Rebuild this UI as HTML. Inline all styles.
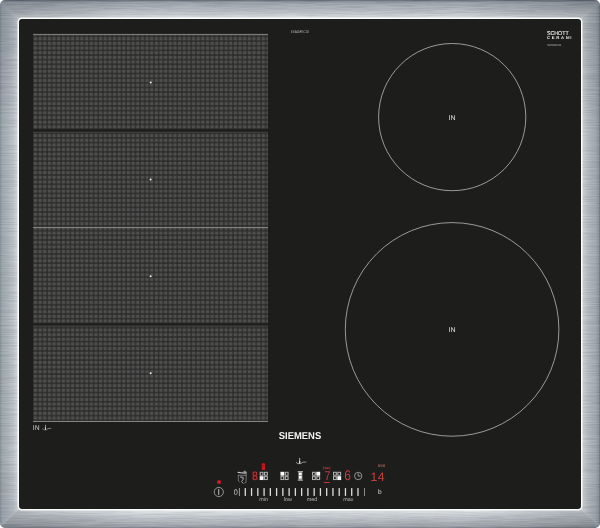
<!DOCTYPE html>
<html lang="en">
<head>
<meta charset="utf-8">
<title>Siemens EX645FEC1E induction hob</title>
<style>
html,body{margin:0;padding:0;background:#fff;}
body{width:600px;height:528px;overflow:hidden;position:relative;font-family:"Liberation Sans",sans-serif;}
svg{position:absolute;left:0;top:0;display:block;}
text{font-family:"Liberation Sans",sans-serif;text-rendering:geometricPrecision;}
svg{will-change:transform;opacity:0.999;}
</style>
</head>
<body>
<svg width="600" height="528" viewBox="0 0 600 528">
<defs>
<linearGradient id="gTop" x1="0" y1="0" x2="0" y2="19" gradientUnits="userSpaceOnUse">
<stop offset="0" stop-color="#5c646c"/>
<stop offset="0.05" stop-color="#78808a"/>
<stop offset="0.12" stop-color="#969ea6"/>
<stop offset="0.30" stop-color="#a6adb4"/>
<stop offset="0.50" stop-color="#b1b7bd"/>
<stop offset="0.68" stop-color="#bfc4c9"/>
<stop offset="0.84" stop-color="#d0d4d7"/>
<stop offset="1" stop-color="#e6e9eb"/>
</linearGradient>
<linearGradient id="gBot" x1="0" y1="509" x2="0" y2="528" gradientUnits="userSpaceOnUse">
<stop offset="0" stop-color="#f0f2f3"/>
<stop offset="0.10" stop-color="#e0e3e6"/>
<stop offset="0.30" stop-color="#cdd1d5"/>
<stop offset="0.55" stop-color="#b9bec4"/>
<stop offset="0.80" stop-color="#a7adb4"/>
<stop offset="0.93" stop-color="#999fa7"/>
<stop offset="1" stop-color="#7c828a"/>
</linearGradient>
<linearGradient id="gLeft" x1="0" y1="0" x2="19" y2="0" gradientUnits="userSpaceOnUse">
<stop offset="0" stop-color="#868e96"/>
<stop offset="0.12" stop-color="#9ea6ae"/>
<stop offset="0.40" stop-color="#abb2ba"/>
<stop offset="0.70" stop-color="#bcc2c8"/>
<stop offset="0.88" stop-color="#cfd4d8"/>
<stop offset="1" stop-color="#e2e5e8"/>
</linearGradient>
<linearGradient id="gRight" x1="581" y1="0" x2="600" y2="0" gradientUnits="userSpaceOnUse">
<stop offset="0" stop-color="#e2e5e8"/>
<stop offset="0.13" stop-color="#c8cdd2"/>
<stop offset="0.40" stop-color="#b2b8bf"/>
<stop offset="0.78" stop-color="#a0a7af"/>
<stop offset="0.92" stop-color="#8e959d"/>
<stop offset="1" stop-color="#687078"/>
</linearGradient>
<filter id="fblur" x="-5%" y="-5%" width="110%" height="110%"><feGaussianBlur stdDeviation="0.7"/></filter>
<linearGradient id="gEnds" x1="0" y1="0" x2="600" y2="0" gradientUnits="userSpaceOnUse">
<stop offset="0" stop-color="#38404a" stop-opacity="0.28"/>
<stop offset="0.22" stop-color="#38404a" stop-opacity="0"/>
<stop offset="0.78" stop-color="#38404a" stop-opacity="0"/>
<stop offset="1" stop-color="#38404a" stop-opacity="0.28"/>
</linearGradient>
<linearGradient id="gEndsV" x1="0" y1="0" x2="0" y2="528" gradientUnits="userSpaceOnUse">
<stop offset="0" stop-color="#38404a" stop-opacity="0.22"/>
<stop offset="0.25" stop-color="#38404a" stop-opacity="0"/>
<stop offset="0.85" stop-color="#38404a" stop-opacity="0"/>
<stop offset="1" stop-color="#38404a" stop-opacity="0.08"/>
</linearGradient>
<filter id="brush" x="0" y="0" width="100%" height="100%" color-interpolation-filters="sRGB">
<feTurbulence type="fractalNoise" baseFrequency="0.03 1.1" numOctaves="3" seed="7" result="n"/>
<feColorMatrix in="n" type="matrix" values="2.4 0 0 0 -0.62  2.4 0 0 0 -0.62  2.4 0 0 0 -0.6  0 0 0 0 1"/>
</filter>
<clipPath id="outer"><rect x="0" y="0" width="600" height="528" rx="5" ry="5"/></clipPath>
<filter id="soft" x="-2%" y="-2%" width="104%" height="104%"><feGaussianBlur stdDeviation="0.7"/></filter>
</defs>

<g clip-path="url(#outer)">
<g filter="url(#fblur)">
<rect x="-20" y="-20" width="640" height="568" fill="#a4abb3"/>
<rect x="-20" y="0" width="640" height="20.0" fill="url(#gTop)"/>
<rect x="-20" y="-20" width="640" height="20.3" fill="#646c74"/>
<rect x="-20" y="508.0" width="640" height="20.0" fill="url(#gBot)"/>
<rect x="-20" y="527.7" width="640" height="20" fill="#7c828a"/>
<polygon points="-20,-20 0,0 19.0,19.0 19.0,509.0 0,528 -20,548" fill="url(#gLeft)"/>
<polygon points="620,-20 600,0 581.0,19.0 581.0,509.0 600,528 620,548" fill="url(#gRight)"/>
<polygon points="-20,-20 620,-20 581.0,19.0 19.0,19.0" fill="url(#gEnds)"/>
<polygon points="-20,548 620,548 581.0,509.0 19.0,509.0" fill="url(#gEnds)"/>
<polygon points="-20,-20 19.0,19.0 19.0,509.0 -20,548" fill="url(#gEndsV)"/>
<polygon points="620,-20 581.0,19.0 581.0,509.0 620,548" fill="url(#gEndsV)"/>
</g>
<rect x="0" y="0" width="600" height="528" filter="url(#brush)" opacity="0.06"/>
</g>
<rect x="18.3" y="18.3" width="563.4" height="491.4" rx="3.6" ry="3.6" fill="#fafbfb" stroke="#fafbfb" stroke-width="1.5"/>
<rect x="19.0" y="19.0" width="562.0" height="490.0" rx="3" ry="3" fill="#1d1d1b"/>
<pattern id="grid0" x="33.1" y="36.5" width="4.65" height="4.63" patternUnits="userSpaceOnUse"><rect x="0" y="0" width="4.65" height="4.63" fill="#2a2b2a"/><rect x="0.65" y="0.65" width="3.4" height="3.35" rx="0.3" fill="#4f4f4e"/></pattern>
<pattern id="grid1" x="33.1" y="133.3" width="4.65" height="4.63" patternUnits="userSpaceOnUse"><rect x="0" y="0" width="4.65" height="4.63" fill="#2a2b2a"/><rect x="0.65" y="0.65" width="3.4" height="3.35" rx="0.3" fill="#4f4f4e"/></pattern>
<pattern id="grid2" x="33.1" y="230.7" width="4.65" height="4.63" patternUnits="userSpaceOnUse"><rect x="0" y="0" width="4.65" height="4.63" fill="#2a2b2a"/><rect x="0.65" y="0.65" width="3.4" height="3.35" rx="0.3" fill="#4f4f4e"/></pattern>
<pattern id="grid3" x="33.1" y="327.7" width="4.65" height="4.63" patternUnits="userSpaceOnUse"><rect x="0" y="0" width="4.65" height="4.63" fill="#2a2b2a"/><rect x="0.65" y="0.65" width="3.4" height="3.35" rx="0.3" fill="#4f4f4e"/></pattern>
<g filter="url(#soft)">
<rect x="33.0" y="34.9" width="235.0" height="94.19999999999999" fill="url(#grid0)"/>
<rect x="33.0" y="132.7" width="235.0" height="94.30000000000001" fill="url(#grid1)"/>
<rect x="33.0" y="228.0" width="235.0" height="95.30000000000001" fill="url(#grid2)"/>
<rect x="33.0" y="326.5" width="235.0" height="94.5" fill="url(#grid3)"/>
</g>
<rect x="33.0" y="33.9" width="235.0" height="1" fill="#848484"/>
<rect x="33.0" y="227.0" width="235.0" height="1" fill="#848484"/>
<rect x="33.0" y="421.0" width="235.0" height="1" fill="#848484"/>
<rect x="33.0" y="131.79999999999998" width="235.0" height="0.8" fill="#4e4e4e"/>
<rect x="33.0" y="325.6" width="235.0" height="0.8" fill="#4e4e4e"/>
<circle cx="150.7" cy="82.5" r="1.0" fill="#f4f4f4"/>
<circle cx="150.6" cy="179.4" r="1.0" fill="#f4f4f4"/>
<circle cx="150.6" cy="276.2" r="1.0" fill="#f4f4f4"/>
<circle cx="150.6" cy="373.2" r="1.0" fill="#f4f4f4"/>
<circle cx="452.2" cy="117.1" r="73.6" fill="none" stroke="#a8a8a8" stroke-width="0.9"/>
<circle cx="452.1" cy="329.4" r="106.8" fill="none" stroke="#a8a8a8" stroke-width="0.9"/>
<text x="452.1" y="119.9" font-size="7" fill="#d0d0d0" stroke="#d0d0d0" stroke-width="0.12" text-anchor="middle">IN</text>
<text x="452.1" y="332" font-size="7" fill="#d0d0d0" stroke="#d0d0d0" stroke-width="0.12" text-anchor="middle">IN</text>
<text x="32.8" y="429.9" font-size="6.7" fill="#b4b4b4" stroke="#b4b4b4" stroke-width="0.12">IN</text>
<text x="290.7" y="33.15" font-size="4.0" fill="#bcbcbc" textLength="18.6" lengthAdjust="spacingAndGlyphs">EX645FEC1E</text>
<text x="278.8" y="439" font-size="10.0" font-weight="bold" fill="#f4f4f4" textLength="42.4" lengthAdjust="spacingAndGlyphs">SIEMENS</text>
<text x="547" y="35.3" font-size="5.6" fill="#f4f4f4" stroke="#f4f4f4" stroke-width="0.08" textLength="21.6" lengthAdjust="spacingAndGlyphs">SCHOTT</text>
<text x="547" y="39.1" font-size="4.2" font-weight="bold" fill="#f0f0f0" textLength="21.9" lengthAdjust="spacing">CERAN</text>
<text x="569.0" y="38.9" font-size="3.8" fill="#e8e8e8">®</text>
<text x="547" y="46" font-size="2.8" fill="#c8c8c8" textLength="14.2" lengthAdjust="spacingAndGlyphs">HIGHTRANS ECO</text>
<g transform="translate(45.5,424.95) scale(0.86)" fill="none" stroke="#a4a4a4" stroke-linecap="round" stroke-linejoin="round"><path d="M-3.35,4.3 Q-2.9,5.55 -1.6,5.6 L1.3,5.6 Q2.2,5.55 2.5,4.3 L6.3,4.05" stroke-width="0.75"/><path d="M0,0.3 L0,4.9" stroke-width="1.0" stroke="#a4a4a4"/><path d="M0,3.4 L0,4.9" stroke-width="1.2" stroke="#e0e0e0"/></g>
<g transform="translate(299.65,458.0) scale(1.0)" fill="none" stroke="#b4b4b4" stroke-linecap="round" stroke-linejoin="round"><path d="M-3.35,4.3 Q-2.9,5.55 -1.6,5.6 L1.3,5.6 Q2.2,5.55 2.5,4.3 L6.3,4.05" stroke-width="0.75"/><path d="M0,0.3 L0,4.9" stroke-width="1.0" stroke="#b4b4b4"/><path d="M0,3.4 L0,4.9" stroke-width="1.2" stroke="#f0f0f0"/></g>
<circle cx="219" cy="482" r="2.0" fill="#cc1c2a"/>
<circle cx="218.8" cy="492" r="4.6" fill="none" stroke="#b8b8b8" stroke-width="0.75"/>
<rect x="218.3" y="489" width="0.9" height="6" fill="#d0d0d0"/>
<text x="233.7" y="495.2" font-size="8.1" fill="#c8c8c8" textLength="4.0" lengthAdjust="spacingAndGlyphs">0</text>
<rect x="238.9" y="488" width="0.9" height="8" fill="#a8a8a8"/>
<rect x="244.65" y="488.1" width="1.3" height="7.8" fill="#dedede"/>
<rect x="250.91" y="488.1" width="1.3" height="7.8" fill="#dedede"/>
<rect x="257.17" y="488.1" width="1.3" height="7.8" fill="#dedede"/>
<rect x="263.43" y="488.1" width="1.3" height="7.8" fill="#dedede"/>
<rect x="269.69" y="488.1" width="1.3" height="7.8" fill="#dedede"/>
<rect x="275.95" y="488.1" width="1.3" height="7.8" fill="#dedede"/>
<rect x="282.21" y="488.1" width="1.3" height="7.8" fill="#dedede"/>
<rect x="288.47" y="488.1" width="1.3" height="7.8" fill="#dedede"/>
<rect x="294.73" y="488.1" width="1.3" height="7.8" fill="#dedede"/>
<rect x="300.99" y="488.1" width="1.3" height="7.8" fill="#dedede"/>
<rect x="307.25" y="488.1" width="1.3" height="7.8" fill="#dedede"/>
<rect x="313.51" y="488.1" width="1.3" height="7.8" fill="#dedede"/>
<rect x="319.77" y="488.1" width="1.3" height="7.8" fill="#dedede"/>
<rect x="326.03" y="488.1" width="1.3" height="7.8" fill="#dedede"/>
<rect x="332.29" y="488.1" width="1.3" height="7.8" fill="#dedede"/>
<rect x="338.55" y="488.1" width="1.3" height="7.8" fill="#dedede"/>
<rect x="344.81" y="488.1" width="1.3" height="7.8" fill="#dedede"/>
<rect x="351.07" y="488.1" width="1.3" height="7.8" fill="#dedede"/>
<rect x="357.33" y="488.1" width="1.3" height="7.8" fill="#dedede"/>
<rect x="364.0" y="488" width="0.8" height="8" fill="#a8a8a8"/>
<text x="263.6" y="500.8" font-size="5.4" fill="#b8b8b8" text-anchor="middle">min</text>
<text x="287.9" y="500.8" font-size="5.4" fill="#b8b8b8" text-anchor="middle">low</text>
<text x="312.1" y="500.8" font-size="5.4" fill="#b8b8b8" text-anchor="middle">med</text>
<text x="348.3" y="500.8" font-size="5.4" fill="#b8b8b8" text-anchor="middle">max</text>
<text x="379.9" y="493.9" font-size="6.6" fill="#d4d4d4" text-anchor="middle">b</text>
<text x="381.5" y="466.8" font-size="4.6" fill="#e07866" text-anchor="middle">min</text>
<rect x="259.70" y="471.80" width="3.85" height="3.9" fill="#b2b2b2"/><rect x="260.80" y="472.80" width="1.65" height="1.90" fill="#141514"/><rect x="264.00" y="471.80" width="3.85" height="3.9" fill="#b2b2b2"/><rect x="265.10" y="472.80" width="1.65" height="1.90" fill="#141514"/><rect x="259.70" y="476.15" width="3.85" height="3.9" fill="#fafafa"/><rect x="264.00" y="476.15" width="3.85" height="3.9" fill="#b2b2b2"/><rect x="265.10" y="477.15" width="1.65" height="1.90" fill="#141514"/>
<rect x="280.45" y="471.80" width="3.85" height="3.9" fill="#fafafa"/><rect x="284.75" y="471.80" width="3.85" height="3.9" fill="#b2b2b2"/><rect x="285.85" y="472.80" width="1.65" height="1.90" fill="#141514"/><rect x="280.45" y="476.15" width="3.85" height="3.9" fill="#b2b2b2"/><rect x="281.55" y="477.15" width="1.65" height="1.90" fill="#141514"/><rect x="284.75" y="476.15" width="3.85" height="3.9" fill="#b2b2b2"/><rect x="285.85" y="477.15" width="1.65" height="1.90" fill="#141514"/>
<rect x="312.00" y="471.80" width="3.85" height="3.9" fill="#b2b2b2"/><rect x="313.10" y="472.80" width="1.65" height="1.90" fill="#141514"/><rect x="316.30" y="471.80" width="3.85" height="3.9" fill="#fafafa"/><rect x="312.00" y="476.15" width="3.85" height="3.9" fill="#b2b2b2"/><rect x="313.10" y="477.15" width="1.65" height="1.90" fill="#141514"/><rect x="316.30" y="476.15" width="3.85" height="3.9" fill="#b2b2b2"/><rect x="317.40" y="477.15" width="1.65" height="1.90" fill="#141514"/>
<rect x="333.00" y="471.80" width="3.85" height="3.9" fill="#b2b2b2"/><rect x="334.10" y="472.80" width="1.65" height="1.90" fill="#141514"/><rect x="337.30" y="471.80" width="3.85" height="3.9" fill="#b2b2b2"/><rect x="338.40" y="472.80" width="1.65" height="1.90" fill="#141514"/><rect x="333.00" y="476.15" width="3.85" height="3.9" fill="#b2b2b2"/><rect x="334.10" y="477.15" width="1.65" height="1.90" fill="#141514"/><rect x="337.30" y="476.15" width="3.85" height="3.9" fill="#fafafa"/>
<rect x="298.2" y="471.6" width="4.2" height="8.8" fill="#8c8c8c"/>
<rect x="297.7" y="471.0" width="5.3" height="0.9" fill="#b4b4b4"/>
<rect x="297.7" y="479.8" width="5.3" height="0.9" fill="#a0a0a0"/>
<rect x="299.0" y="472.8" width="2.7" height="2.3" fill="#fafafa"/>
<rect x="299.0" y="476.0" width="2.7" height="2.6" fill="#fafafa"/>
<rect x="261.8" y="463.2" width="3.2" height="6.9" rx="0.7" fill="#c8141e"/>
<rect x="262.6" y="465.6" width="1.6" height="0.9" fill="#a01018"/>
<rect x="252.3" y="471.6" width="5.1" height="8.2" fill="#4a1214"/>
<text x="251.9" y="480.1" font-size="12.2" fill="#b83c3e" textLength="5.9" lengthAdjust="spacingAndGlyphs">8</text>
<text x="257.0" y="480.3" font-size="6" fill="#b83c3e">.</text>
<text x="324.4" y="479.9" font-size="12.8" fill="#c23a3c" textLength="6.0" lengthAdjust="spacingAndGlyphs">7</text>
<rect x="323.8" y="482.0" width="5.8" height="1.0" fill="#c23a3c"/>
<path d="M323.6,466.6 L323.6,469.6 M329.8,466.6 L329.8,469.6 M324.2,468.1 L329.2,468.1 M325.2,467 L326.6,469.2 M328.2,467 L326.8,469.2" stroke="#b43236" stroke-width="0.75" fill="none"/>
<text x="344.3" y="480.4" font-size="13.8" fill="#c4403e" textLength="6.7" lengthAdjust="spacingAndGlyphs">6</text>
<text x="370.4" y="480.5" font-size="12.3" fill="#c4403e" textLength="14.2" lengthAdjust="spacing">14</text>
<circle cx="358.2" cy="476" r="3.7" fill="none" stroke="#b4b4b4" stroke-width="0.75"/>
<path d="M358.2,473.4 L358.2,476.1 L360.6,476.1" fill="none" stroke="#d0d0d0" stroke-width="0.7"/>
<g fill="none" stroke-linecap="round" stroke-linejoin="round"><path d="M238.1,472.4 L242.6,473.0" stroke="#c8c8c8" stroke-width="1.2"/><path d="M243.2,471.9 L245.2,470.9 L246.6,472.4 L246.2,473.6 L243.4,473.4 Z" fill="#9c9c9c" stroke="#a8a8a8" stroke-width="0.6"/><path d="M238.3,475.3 L246.2,475.3" stroke="#8a8a8a" stroke-width="0.8"/><path d="M238.3,475.3 L238.4,481.0 L239.6,482.0" stroke="#7c7c7c" stroke-width="0.8"/><path d="M246.2,473.8 L246.0,482.4 L244.8,483.0" stroke="#888888" stroke-width="0.8"/><path d="M240.6,477.2 L243.6,478.6 L241.6,481.6 L243.0,483.3" stroke="#a4a4a4" stroke-width="1.0"/><path d="M241.0,476.6 L243.4,477.4" stroke="#909090" stroke-width="0.9"/></g>
</svg>
</body>
</html>
